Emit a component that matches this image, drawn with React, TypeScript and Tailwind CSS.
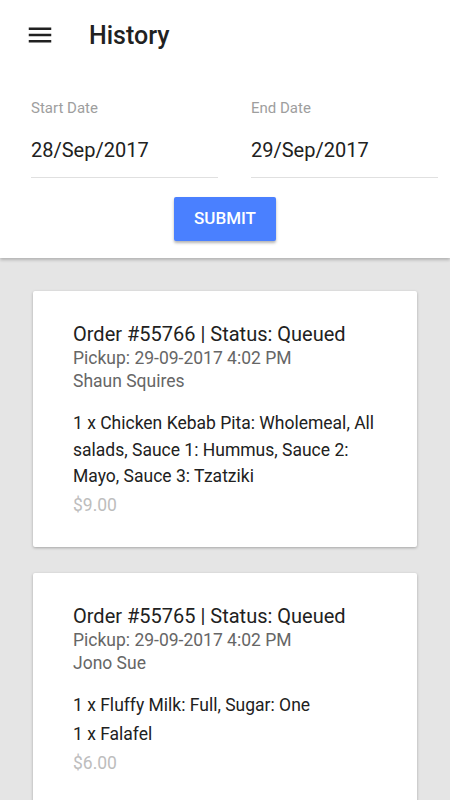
import React from 'react';

type Order = {
  id: number;
  status: string;
  pickup: string;
  customer: string;
  items: string[];
  total: string;
};

const orders: Order[] = [
  {
    id: 55766,
    status: 'Queued',
    pickup: '29-09-2017 4:02 PM',
    customer: 'Shaun Squires',
    items: ['1 x Chicken Kebab Pita: Wholemeal, All salads, Sauce 1: Hummus, Sauce 2: Mayo, Sauce 3: Tzatziki'],
    total: '$9.00',
  },
  {
    id: 55765,
    status: 'Queued',
    pickup: '29-09-2017 4:02 PM',
    customer: 'Jono Sue',
    items: ['1 x Fluffy Milk: Full, Sugar: One', '1 x Falafel'],
    total: '$6.00',
  },
];

const DateField = ({ label, value }: { label: string; value: string }) => (
  <div className="flex-1 border-b border-[#e0e0e0] pb-[15px]">
    <div className="text-[15px] leading-[20px] text-[#9e9e9e]">{label}</div>
    <div className="mt-[20px] text-[20px] leading-[24px] text-[#212121]">{value}</div>
  </div>
);

const OrderCard = ({ order }: { order: Order }) => (
  <div className="rounded-[2px] bg-white px-[40px] pt-[31px] pb-[28px] shadow-[0_1px_3px_rgba(0,0,0,0.28)]">
    <div className="text-[20px] leading-[25px] text-[#212121]">
      Order #{order.id} | Status: {order.status}
    </div>
    <div className="text-[17.5px] leading-[23px] text-[#666666]">Pickup: {order.pickup}</div>
    <div className="text-[17.5px] leading-[23px] text-[#666666]">{order.customer}</div>
    <div className="mt-[17px]">
      {order.items.map((item) => (
        <p key={item} className="mb-[2.5px] text-[17.5px] leading-[26.5px] text-[#212121]">
          {item}
        </p>
      ))}
    </div>
    <div className="text-[17.5px] leading-[26.5px] text-[#bdbdbd]">{order.total}</div>
  </div>
);

export default function App() {
  return (
    <div className="min-h-screen bg-[#e5e5e5] font-['Roboto',sans-serif]">
      {/* header + filter */}
      <div className="relative z-10 bg-white pb-[17px] shadow-[0_2px_3px_rgba(0,0,0,0.22)]">
        <div className="flex h-[70px] items-center pl-[25px]">
          <svg width="30" height="30" viewBox="0 0 24 24" fill="#212121">
            <path d="M3 18h18v-2H3v2zm0-5h18v-2H3v2zm0-7v2h18V6H3z" />
          </svg>
          <h1 className="ml-[34px] mt-[2px] text-[25px] font-medium leading-[30px] text-[#212121]">History</h1>
        </div>
        <div className="mt-[28px] flex gap-[33px] pl-[31px] pr-[12px]">
          <DateField label="Start Date" value="28/Sep/2017" />
          <DateField label="End Date" value="29/Sep/2017" />
        </div>
        <div className="mt-[19px] flex justify-center">
          <button className="h-[44px] w-[102px] rounded-[2px] bg-[#4a80ff] text-[17px] font-medium uppercase text-white shadow-[0_2px_3px_rgba(0,0,0,0.3)]">
            Submit
          </button>
        </div>
      </div>

      {/* orders */}
      <div className="flex flex-col gap-[26px] px-[33px] pt-[33px] pb-[33px]">
        {orders.map((o) => (
          <OrderCard key={o.id} order={o} />
        ))}
      </div>
    </div>
  );
}
